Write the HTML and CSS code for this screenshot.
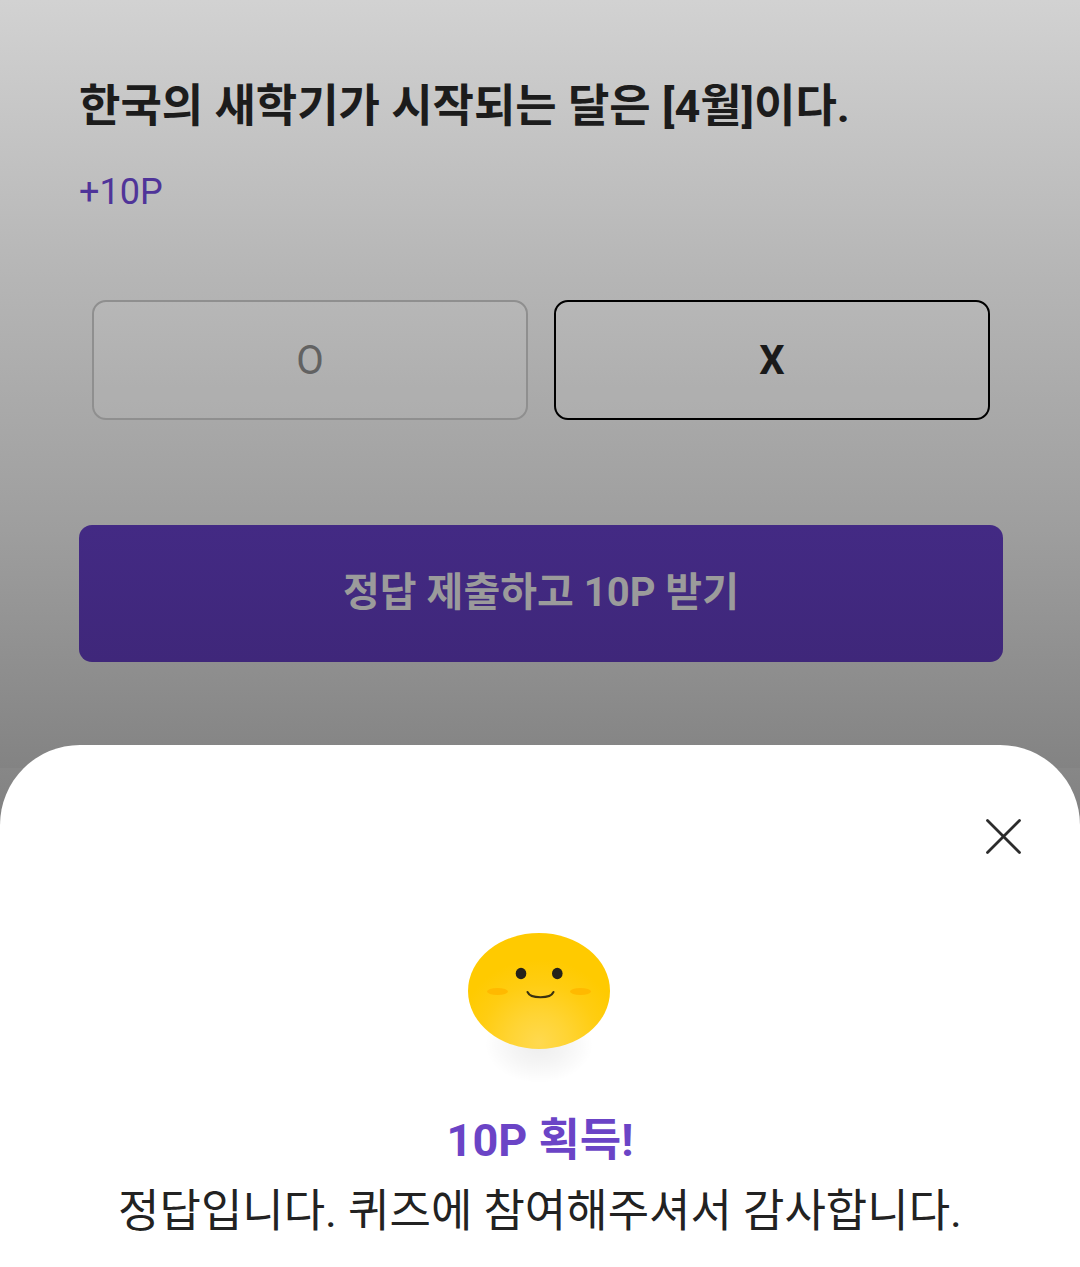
FILE: index.html
```html
<!DOCTYPE html>
<html lang="ko">
<head>
<meta charset="utf-8">
<meta name="viewport" content="width=device-width, initial-scale=1">
<title>퀴즈</title>
<link rel="stylesheet" href="styles.css">
</head>
<body>
<main class="quiz">
  <h1 class="question">한국의 새학기가 시작되는 달은 [4월]이다.</h1>
  <p class="reward">+10P</p>
  <div class="choices">
    <button class="choice" type="button">O</button>
    <button class="choice selected" type="button">X</button>
  </div>
  <button class="submit" type="button">정답 제출하고 10P 받기</button>
</main>
<section class="sheet" role="dialog" aria-labelledby="result-title">
  <button class="close" type="button" aria-label="닫기">
    <svg viewBox="0 0 36 36" width="36" height="36" fill="none" stroke="#2c2c2c" stroke-width="2.8" stroke-linecap="round"><path d="M2.500 1.500 34.500 33.500M34.500 1.500 2.500 33.500"/></svg>
  </button>
  <svg class="face" viewBox="0 0 200 160" width="200" height="160" aria-hidden="true">
    <defs>
      <radialGradient id="skin" gradientUnits="userSpaceOnUse" cx="99" cy="112" r="84">
        <stop offset="0" stop-color="#ffd94f"/><stop offset=".35" stop-color="#ffd433"/><stop offset=".7" stop-color="#ffcd12"/><stop offset="1" stop-color="#ffca00"/>
      </radialGradient>
      <radialGradient id="shade">
        <stop offset="0" stop-color="#000" stop-opacity=".07"/><stop offset=".5" stop-color="#000" stop-opacity=".04"/><stop offset="1" stop-color="#000" stop-opacity="0"/>
      </radialGradient>
    </defs>
    <ellipse cx="99" cy="114" rx="54" ry="38" fill="url(#shade)"/>
    <ellipse cx="99" cy="60" rx="71" ry="58" fill="url(#skin)"/>
    <ellipse cx="57.500" cy="60.500" rx="10.500" ry="3.500" fill="#ffb900"/>
    <ellipse cx="140.500" cy="60.500" rx="10.500" ry="3.500" fill="#ffb900"/>
    <ellipse cx="81" cy="42.500" rx="5.300" ry="5.800" fill="#25221a"/>
    <ellipse cx="117.300" cy="42.500" rx="5.300" ry="5.800" fill="#25221a"/>
    <path d="M87.500 61c3 7 23 7 26 0" fill="none" stroke="#3a3210" stroke-width="2" stroke-linecap="round"/>
  </svg>
  <h2 class="result" id="result-title">10P 획득!</h2>
  <p class="message">정답입니다. 퀴즈에 참여해주셔서 감사합니다.</p>
</section>
</body>
</html>
```

FILE: styles.css
```css
* { box-sizing: border-box; }
body {
  margin: 0;
  min-height: 100vh;
  display: flex;
  flex-direction: column;
  font-family: Roboto, "Noto Sans CJK KR", sans-serif;
  color: #1c1c1c;
  background: linear-gradient(#d2d2d2 0, #b5b5b5 280px, #9e9e9e 530px, #838383 768px, #878787 768px, #808080 830px);
}
h1, h2, p { margin: 0; }
button { font: inherit; padding: 0; cursor: pointer; }
.quiz { padding: 75px 77px 83px 79px; }
.question { font-size: 45px; line-height: 64px; }
.reward { margin-top: 25px; font-size: 36px; line-height: 56px; color: #4f3499; }
.choices { display: flex; gap: 26px; margin: 80px 13px 105px; }
.choice {
  flex: 1;
  height: 120px;
  border: 2px solid #8f8f8f;
  border-radius: 14px;
  background: rgba(255, 255, 255, .06);
  font-size: 40px;
  color: #626262;
}
.selected { border-color: #000; color: #1a1a1a; font-weight: 700; }
.submit {
  width: 100%;
  height: 137px;
  padding-bottom: 10px;
  border: 0;
  border-radius: 13px;
  background: linear-gradient(#432a84, #3f277a);
  color: #9b9b9b;
  font-size: 40px;
  font-weight: 700;
}
.sheet {
  flex: 1;
  display: flex;
  flex-direction: column;
  align-items: center;
  padding: 74px 40px 24px;
  border-radius: 80px 80px 0 0;
  background: #fff;
}
.close {
  align-self: flex-end;
  width: 36px;
  height: 36px;
  margin-right: 19px;
  border: 0;
  background: none;
}
.close svg { display: block; }
.face { display: block; margin-top: 76px; }
.result { margin-top: 18px; font-size: 45px; line-height: 64px; color: #6b44c6; }
.message { margin-top: 7px; font-size: 45px; line-height: 64px; text-align: center; color: #222; }
```
